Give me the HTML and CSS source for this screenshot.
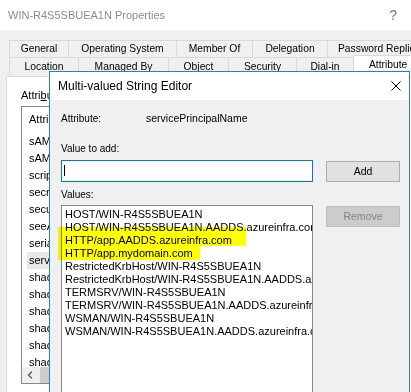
FILE: index.html
```
<!DOCTYPE html>
<html lang="en">
<head>
    <meta charset="UTF-8">
    <meta name="viewport" content="width=device-width, initial-scale=1.0">
    <title>WIN-R4S5SBUEA1N Properties</title>
    <link rel="stylesheet" href="styles.css">
</head>
<body>
    <div class="props">
        <div class="caption">
            <span class="caption-title">WIN-R4S5SBUEA1N Properties</span>
            <span class="help">?</span>
        </div>
        <div class="sheet">
            <div class="tabrow row1">
                <div class="tab t-general">General</div>
                <div class="tab t-os">Operating System</div>
                <div class="tab t-member">Member Of</div>
                <div class="tab t-deleg">Delegation</div>
                <div class="tab t-pwd">Password Replication</div>
            </div>
            <div class="tabrow row2">
                <div class="tab t-location">Location</div>
                <div class="tab t-managed">Managed By</div>
                <div class="tab t-object">Object</div>
                <div class="tab t-security">Security</div>
                <div class="tab t-dialin">Dial-in</div>
                <div class="tab t-attr active">Attribute Editor</div>
            </div>
            <div class="page">
                <div class="page-label">Attri<u>b</u>utes:</div>
                <div class="attr-list">
                    <div class="attr-rows">
                        <div class="attr-head">Attribute</div>
                        <div class="attr-item">sAMAccountName</div>
                        <div class="attr-item">sAMAccountType</div>
                        <div class="attr-item">scriptPath</div>
                        <div class="attr-item">secretary</div>
                        <div class="attr-item">securityIdentifier</div>
                        <div class="attr-item">seeAlso</div>
                        <div class="attr-item">serialNumber</div>
                        <div class="attr-item sel">servicePrincipalName</div>
                        <div class="attr-item">shadowExpire</div>
                        <div class="attr-item">shadowFlag</div>
                        <div class="attr-item">shadowInactive</div>
                        <div class="attr-item">shadowLastChange</div>
                        <div class="attr-item">shadowMax</div>
                        <div class="attr-item">shadowMin</div>
                    </div>
                    <div class="hscroll">
                        <span class="arrow">
                            <svg width="17" height="16" viewBox="0 0 17 16"><polyline points="10,4.5 6.5,8 10,11.5" fill="none" stroke="#606060" stroke-width="1.4"/></svg>
                        </span>
                        <span class="thumb"></span>
                    </div>
                </div>
            </div>
        </div>
    </div>

    <div class="editor">
        <div class="editor-caption">
            <span>Multi-valued String Editor</span>
            <svg class="close" width="10" height="10" viewBox="0 0 10 10"><path d="M0.5 0.5L9.5 9.5M9.5 0.5L0.5 9.5" stroke="#000" stroke-width="1"/></svg>
        </div>
        <div class="editor-body">
            <div class="field">
                <span class="field-label">Attribute:</span>
                <span class="field-value">servicePrincipalName</span>
            </div>
            <div class="add-label">Value to add:</div>
            <div class="editor-grid">
                <div class="textbox"><span class="caret"></span></div>
                <div class="btn">Add</div>
                <div class="values-label">Values:</div>
                <div class="values">
                    <div>HOST/WIN-R4S5SBUEA1N</div>
                    <div>HOST/WIN-R4S5SBUEA1N.AADDS.azureinfra.com</div>
                    <div>HTTP/app.AADDS.azureinfra.com</div>
                    <div>HTTP/app.mydomain.com</div>
                    <div>RestrictedKrbHost/WIN-R4S5SBUEA1N</div>
                    <div>RestrictedKrbHost/WIN-R4S5SBUEA1N.AADDS.azureinfra.com</div>
                    <div>TERMSRV/WIN-R4S5SBUEA1N</div>
                    <div>TERMSRV/WIN-R4S5SBUEA1N.AADDS.azureinfra.com</div>
                    <div>WSMAN/WIN-R4S5SBUEA1N</div>
                    <div>WSMAN/WIN-R4S5SBUEA1N.AADDS.azureinfra.com</div>
                </div>
                <div class="btn disabled">Remove</div>
            </div>
        </div>
        <div class="mark mark-a"></div>
        <div class="mark mark-b"></div>
    </div>
</body>
</html>
```

FILE: styles.css
```
* { box-sizing: border-box; }
html, body { margin: 0; }
body {
    width: 411px;
    height: 392px;
    overflow: hidden;
    position: relative;
    background: #f0f0f0;
    font-family: "Liberation Sans", Arial, sans-serif;
    font-size: 11px;
    color: #000;
}

/* background properties window */
.caption {
    height: 30px;
    background: #fff;
    display: flex;
    align-items: center;
    justify-content: space-between;
    padding: 0 14px 0 8px;
}
.caption-title { color: #8c8c8c; font-size: 11px; }
.help { color: #7a7a7a; font-size: 14px; }

.sheet { padding-top: 10px; }
.tabrow { display: flex; padding-left: 9px; }
.tab {
    flex: none;
    border: 1px solid #d9d9d9;
    border-bottom: 0;
    border-right: 0;
    background: #f0f0f0;
    text-align: center;
    font-size: 10.3px;
    white-space: nowrap;
    overflow: hidden;
}
.tab:last-child { border-right: 1px solid #d9d9d9; }
.row1 .tab { height: 17px; line-height: 16px; }
.row2 { height: 19px; align-items: flex-end; }
.row2 .tab { height: 19px; line-height: 18px; }
.row2 .tab.active { height: 21px; background: #fff; }

.t-general { width: 59px; }
.t-os { width: 108px; }
.t-member { width: 76px; }
.t-deleg { width: 75px; }
.t-pwd { width: 110px; text-align: left; padding-left: 10px; }
.t-location { width: 69px; }
.t-managed { width: 90px; }
.t-object { width: 60px; }
.t-security { width: 68px; }
.t-dialin { width: 57px; }
.t-attr { width: 96px; text-align: left; padding-left: 15px; }

.page {
    margin-left: 6px;
    height: 330px;
    background: #fff;
    border: 1px solid #d9d9d9;
    border-right: 0;
    padding: 12px 0 0 14px;
}
.page-label { line-height: 13px; margin-bottom: 4px; }
.attr-list {
    width: 370px;
    height: 278px;
    border: 1px solid #828790;
    display: flex;
    flex-direction: column;
}
.attr-rows { flex: 1; overflow: hidden; }
.attr-head { height: 26px; padding: 4px 0 0 7px; line-height: 17px; }
.attr-item { line-height: 17px; padding-left: 7px; white-space: nowrap; }
.attr-item.sel { background: #e8e8e8; margin-left: 5px; padding-left: 2px; }
.hscroll { height: 16px; display: flex; background: #f0f0f0; }
.arrow { width: 17px; display: flex; }
.thumb { flex: 1; background: #cdcdcd; margin-left: 1px; }

/* multi-valued string editor dialog */
.editor {
    position: absolute;
    left: 49px;
    top: 71px;
    width: 361px;
    height: 330px;
    border: 1px solid #1883d7;
    background: #f0f0f0;
}
.editor-caption {
    height: 28px;
    background: #fff;
    display: flex;
    align-items: center;
    justify-content: space-between;
    padding: 0 8px;
    font-size: 12px;
}
.editor-body { padding: 12px 0 0 11px; font-size: 10px; }
.field { display: flex; line-height: 13px; }
.field-label { width: 85px; }
.field-value { font-size: 10.5px; }
.add-label { margin-top: 17px; line-height: 13px; }
.editor-grid {
    display: grid;
    grid-template-columns: 252px 74px;
    column-gap: 13px;
    margin-top: 5px;
    align-items: start;
}
.textbox {
    height: 22px;
    border: 1px solid #0078d7;
    background: #fff;
    padding: 4px 0 0 2px;
}
.caret { display: block; width: 1px; height: 11px; background: #000; }
.btn {
    height: 21px;
    margin-top: 1px;
    border: 1px solid #adadad;
    background: #e1e1e1;
    font-size: 10.5px;
    line-height: 19px;
    text-align: center;
}
.btn.disabled { background: #cccccc; border-color: #bfbfbf; color: #838383; }
.values-label { grid-column: 1 / 3; margin-top: 6px; line-height: 13px; }
.values {
    margin-top: 4px;
    height: 200px;
    border: 1px solid #828790;
    background: #fff;
    padding: 2px 0 0 3px;
    overflow: hidden;
    font-size: 11px;
    line-height: 13px;
    white-space: nowrap;
}
.values + .btn { margin-top: 5px; }

/* marker highlight drawn over the list */
.mark { position: absolute; background: #ffff00; mix-blend-mode: multiply; }
.mark-a { left: 8px; top: 155px; width: 188px; height: 19px; }
.mark-b { left: 8px; top: 173px; width: 142px; height: 15px; }
```
